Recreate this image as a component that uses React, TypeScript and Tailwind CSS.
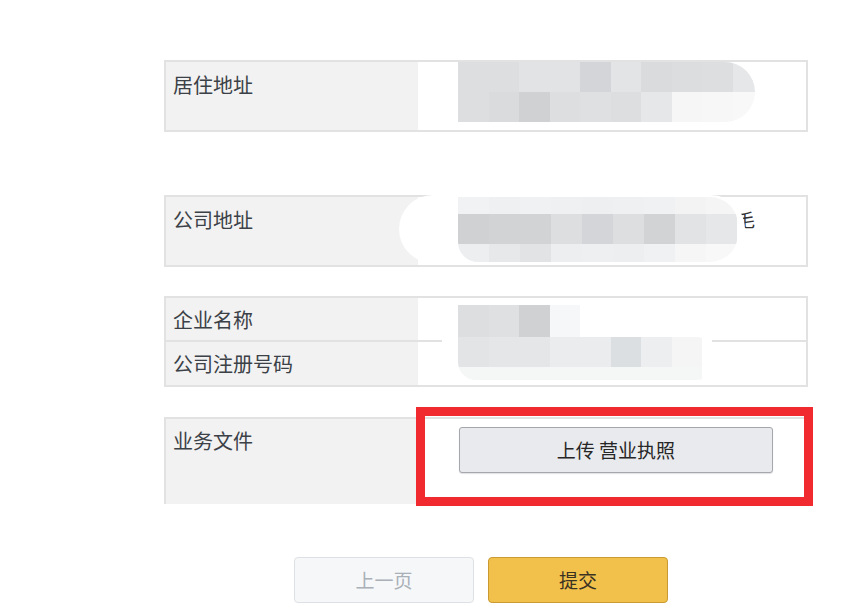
import React from "react";

const font = { fontFamily: '"Noto Sans CJK SC", "Noto Sans", sans-serif' };

function Row({ colors, h, w = "w-[30.5px]" }: { colors: string[]; h: string; w?: string }) {
  return (
    <div className={`flex ${h}`}>
      {colors.map((c, i) => (
        <div key={i} className={`${w} shrink-0`} style={{ backgroundColor: c }} />
      ))}
    </div>
  );
}

export default function App() {
  return (
    <div className="w-[865px] h-[615px] bg-white overflow-hidden text-[#3b4147]" style={font}>
      <div className="pl-[164px] pt-[60px] w-[808px] flex flex-col">
        {/* 居住地址 */}
        <div className="relative flex h-[72px] border-2 border-[#e2e2e2]">
          <div className="w-[252px] bg-[#f2f2f2] pl-[7px] text-[20px] leading-[46px]">居住地址</div>
          <div className="flex-1 bg-white" />
          <div className="absolute left-[292px] top-0 w-[297px] rounded-r-[34px] overflow-hidden">
            <Row
              h="h-[30px]"
              colors={["#dcdee0", "#dcdedf", "#e2e3e5", "#e2e3e5", "#d3d5d8", "#e3e4e6", "#d9dbdd", "#dcdddf", "#dcdedf", "#e6e7e9"]}
            />
            <Row
              h="h-[30px]"
              colors={["#dcdee0", "#d9dbdd", "#cfd1d3", "#dcdee0", "#dee0e2", "#dcdee0", "#e5e7e8", "#f6f6f6", "#f7f7f7", "#f8f8f8"]}
            />
          </div>
        </div>

        {/* 公司地址 */}
        <div className="relative flex h-[72px] border-2 border-[#e2e2e2] mt-[63px]">
          <div className="w-[252px] bg-[#f2f2f2] pl-[7px] text-[20px] leading-[46px]">公司地址</div>
          <div className="flex-1 bg-white pl-[319px] text-[18px] leading-[44px] text-[#333]">毛</div>
          <div className="absolute left-[233px] top-[-2px] w-[346px] h-[68px] rounded-[34px] bg-white" />
          <div className="absolute left-[292px] top-0 w-[280px] rounded-r-[28px] rounded-bl-[20px] overflow-hidden">
            <Row
              h="h-[17px]"
              w="w-[31px]"
              colors={["#f1f2f3", "#eef0f1", "#f0f1f2", "#eff0f1", "#eeeff0", "#eff0f1", "#f0f1f2", "#f3f3f4", "#f5f5f5"]}
            />
            <Row
              h="h-[30px]"
              w="w-[31px]"
              colors={["#cfd1d3", "#d1d3d5", "#d1d3d5", "#dcdee0", "#d3d5d8", "#dcdee0", "#d1d3d5", "#e1e3e4", "#e6e7e8"]}
            />
            <Row
              h="h-[18px]"
              w="w-[31px]"
              colors={["#eceeef", "#e6e8e9", "#e1e3e4", "#eceeef", "#eeeff0", "#eceeef", "#f0f1f2", "#f6f6f6", "#f8f8f8"]}
            />
          </div>
        </div>

        {/* 企业名称 / 公司注册号码 */}
        <div className="relative flex flex-col border-2 border-[#e2e2e2] mt-[29px]">
          <div className="flex h-[44px] border-b-2 border-[#e2e2e2]">
            <div className="w-[252px] bg-[#f2f2f2] pl-[7px] text-[20px] leading-[44px]">企业名称</div>
            <div className="flex-1 bg-white" />
          </div>
          <div className="flex h-[43px]">
            <div className="w-[252px] bg-[#f2f2f2] pl-[7px] text-[20px] leading-[43px]">公司注册号码</div>
            <div className="flex-1 bg-white" />
          </div>
          <div className="absolute left-[276px] top-[0px] w-[270px] h-[87px] rounded-[30px] bg-white" />
          <div className="absolute left-[292px] top-[7px] w-[260px]">
            <Row h="h-[32px]" colors={["#dcdee0", "#dfe0e2", "#cfd1d3", "#f6f7f8"]} />
            <div className="rounded-bl-[20px] rounded-r-[24px] overflow-hidden">
              <Row
                h="h-[30px]"
                colors={["#e3e4e6", "#e5e6e7", "#e5e6e7", "#ebeced", "#ebeced", "#dcdfe1", "#edeeef", "#f5f5f5"]}
              />
              <div className="h-[13px] w-[244px] bg-[#f5f6f6]" />
            </div>
          </div>
        </div>

        {/* 业务文件 */}
        <div className="relative flex h-[87px] border-t-2 border-l-2 border-r-2 border-[#e2e2e2] mt-[30px]">
          <div className="w-[250px] bg-[#f2f2f2] pl-[7px] text-[20px] leading-[44px]">业务文件</div>
          <div className="flex-1 bg-white pl-[43px] pt-[8px]">
            <button className="w-[314px] h-[46px] bg-[#e9eaed] border border-[#a4a7ab] rounded-[3px] shadow-[0_1px_1px_rgba(0,0,0,0.12)] text-[19px] text-[#262626]">
              上传 营业执照
            </button>
          </div>
          <div className="absolute left-[250px] top-[-12px] w-[397px] h-[99px] border-[9px] border-[#f02a2e] pointer-events-none" />
        </div>

        {/* buttons */}
        <div className="flex justify-center gap-[14px] mt-[53px] pr-[10px]">
          <button className="w-[180px] h-[46px] bg-[#f6f7f9] border border-[#dde0e4] rounded-[4px] text-[19px] text-[#a9b0b7]">
            上一页
          </button>
          <button className="w-[180px] h-[46px] bg-[#f1c14b] border border-[#c99a31] rounded-[4px] text-[19px] text-[#3a3222]">
            提交
          </button>
        </div>
      </div>
    </div>
  );
}
